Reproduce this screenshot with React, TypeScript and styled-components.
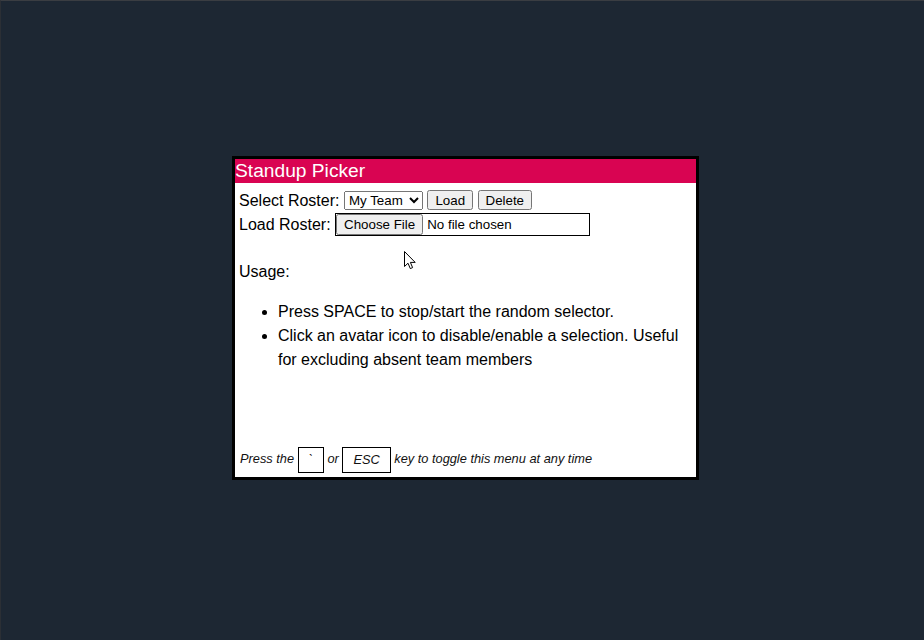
import React from "react";
import styled, { createGlobalStyle } from "styled-components";

const Global = createGlobalStyle`
  html, body { margin: 0; padding: 0; background: #1d2733; }
  body { font-family: "Liberation Sans", Arial, sans-serif; }
`;

const Screen = styled.div`
  position: relative;
  width: 924px;
  height: 640px;
  box-sizing: border-box;
  border-top: 1px solid #3a3d42;
  border-left: 1px solid #2b2f35;
  background: #1d2733;
  padding: 155px 0 0 231px;
`;

const Panel = styled.div`
  width: 461px;
  height: 318px;
  border: 3px solid #000;
  background: #fff;
  color: #000;
  display: flex;
  flex-direction: column;
`;

const Header = styled.div`
  background: #d90452;
  color: #fff;
  font-size: 19.2px;
  height: 24px;
  line-height: 24px;
  padding-left: 0;
`;

const Body = styled.div`
  flex: 1;
  display: flex;
  flex-direction: column;
  padding: 6px 3px 4px 4px;
  font-size: 16px;
  line-height: 24px;
`;

const Row = styled.div`
  height: 24px;
  white-space: nowrap;
`;

const Select = styled.select`
  font-family: "Liberation Sans", Arial, sans-serif;
  font-size: 13.333px;
  width: 79px;
  height: 19px;
  vertical-align: 1px;
`;

const Button = styled.button`
  font-family: "Liberation Sans", Arial, sans-serif;
  font-size: 13.333px;
  height: 20px;
  padding: 1px 6px;
  vertical-align: 1px;
`;

const FileInput = styled.input`
  font-family: "Liberation Sans", Arial, sans-serif;
  font-size: 13.333px;
  width: 255px;
  box-sizing: border-box;
  border: 1px solid #000;
  vertical-align: 1px;
`;

const Usage = styled.div`
  margin-top: 23px;
`;

const List = styled.ul`
  margin: 16px 0 0;
  padding-left: 39px;
`;

const Footer = styled.div`
  margin-top: auto;
  font-size: 12.8px;
  font-style: italic;
  line-height: 26px;
  padding-left: 1px;
  color: #111;
`;

const Key = styled.span`
  display: inline-block;
  border: 1px solid #000;
  padding: 5px 10px;
  line-height: 14px;
  vertical-align: middle;
`;

const Cursor = styled.svg`
  position: absolute;
  left: 403px;
  top: 250px;
`;

export default function App() {
  return (
    <>
      <Global />
      <Screen>
        <Panel>
          <Header>Standup Picker</Header>
          <Body>
            <Row>
              Select Roster:{" "}
              <Select defaultValue="team">
                <option value="team">My Team</option>
              </Select>{" "}
              <Button>Load</Button> <Button>Delete</Button>
            </Row>
            <Row>
              Load Roster: <FileInput type="file" />
            </Row>
            <Usage>Usage:</Usage>
            <List>
              <li>Press SPACE to stop/start the random selector.</li>
              <li>
                Click an avatar icon to disable/enable a selection. Useful for
                excluding absent team members
              </li>
            </List>
            <Footer>
              Press the <Key>`</Key> or <Key>ESC</Key> key to toggle this menu at
              any time
            </Footer>
          </Body>
        </Panel>
        <Cursor width="13" height="20" viewBox="0 0 13 20">
          <path
            d="M0.5 0.5 L0.5 15.5 L4 12.2 L6.3 17.6 L8.6 16.6 L6.4 11.4 L11.2 11.4 Z"
            fill="#fff"
            stroke="#000"
            strokeWidth="1"
          />
        </Cursor>
      </Screen>
    </>
  );
}
